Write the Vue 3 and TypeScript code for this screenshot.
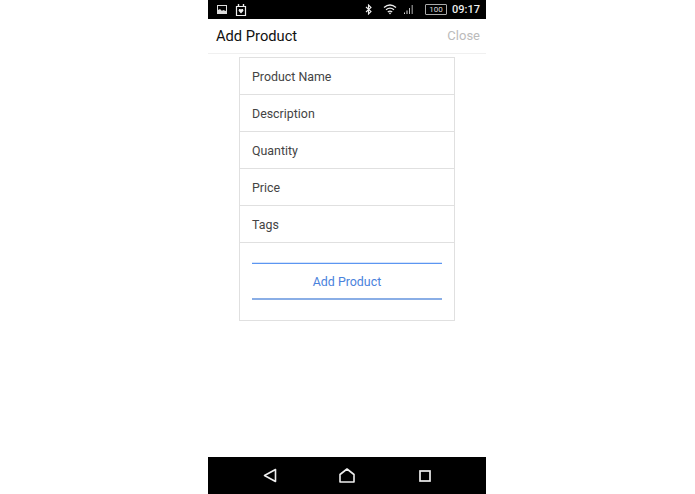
<script setup lang="ts">
const fields: string[] = ['Product Name', 'Description', 'Quantity', 'Price', 'Tags']
</script>

<template>
  <div class="page">
    <div class="phone">
      <div class="status">
        <div class="status-left">
          <svg width="10" height="9" viewBox="0 0 10 9"><rect x="0.5" y="0.5" width="9" height="8" fill="none" stroke="#ddd" /><path d="M1 8V5l2-1 2 2 1-1 3 1v2z" fill="#ddd" /></svg>
          <svg width="12" height="12" viewBox="0 0 11 12"><path d="M1 2.500h9v9H1z" fill="none" stroke="#eee" stroke-width="1.200" /><path d="M3 0v3M8 0v3" stroke="#eee" stroke-width="1.400" /><path d="M5.500 9.500 3 6.800 3.600 5h1.400l.5.800.5-.8h1.400l.6 1.800z" fill="#eee" /></svg>
        </div>
        <div class="status-right">
          <svg class="bt" width="7" height="11" viewBox="0 0 7 11"><path d="M1 3l5 4.500L3.500 10V1L6 3.500 1 8" fill="none" stroke="#eee" stroke-width="1.100" /></svg>
          <svg class="wifi" width="14" height="11" viewBox="0 0 14 11"><path d="M1 3.500Q7-1.500 13 3.500M3 5.800Q7 2.500 11 5.800M4.800 8Q7 6.200 9.200 8" fill="none" stroke="#eee" stroke-width="1.300" /><path d="M5.800 9Q7 8 8.200 9L7 10.500z" fill="#eee" /></svg>
          <svg class="signal" width="11" height="11" viewBox="0 0 11 11"><path d="M1 10h1V8.500H1zM3.500 10h1V6.500h-1z" fill="#ddd" /><path d="M6 10h1V4H6z" fill="#bbb" /><path d="M8.500 10h1.500V1H8.500z" fill="#777" /></svg>
          <div class="battery"><span>100</span></div>
          <span class="time">09:17</span>
        </div>
      </div>

      <header class="header">
        <span class="title">Add Product</span>
        <span class="close">Close</span>
      </header>

      <main class="content">
        <div class="card">
          <div v-for="f in fields" :key="f" class="field">{{ f }}</div>
          <div class="action">
            <div class="btn">Add Product</div>
          </div>
        </div>
      </main>

      <nav class="nav">
        <svg width="14" height="15" viewBox="0 0 14 15"><path d="M12.500 1.500v12L1.500 7.500z" fill="none" stroke="#eee" stroke-width="1.600" stroke-linejoin="round" /></svg>
        <svg class="home" width="16" height="15" viewBox="0 0 16 15"><path d="M1 6.500 8 1l7 5.500V14H1z" fill="none" stroke="#eee" stroke-width="1.600" stroke-linejoin="round" /></svg>
        <svg width="12" height="12" viewBox="0 0 12 12"><rect x="1" y="1" width="10" height="10" fill="none" stroke="#eee" stroke-width="1.700" /></svg>
      </nav>
    </div>
  </div>
</template>

<style>
html, body { margin: 0; background: #fff; }
</style>

<style scoped>
.page { width: 695px; height: 494px; box-sizing: border-box; padding-left: 208px; background: #fff; overflow: hidden; }
.phone { width: 278px; height: 494px; display: flex; flex-direction: column; font-family: Roboto, "Liberation Sans", sans-serif; }
.status { height: 19px; flex: none; background: #000; display: flex; justify-content: space-between; align-items: center; padding: 0 6px 0 9px; color: #eee; }
.status-left { display: flex; align-items: center; gap: 8px; }
.status-right { display: flex; align-items: center; }
.bt { margin-right: 11px; }
.wifi { margin-right: 6px; }
.signal { margin-right: 11px; }
.battery { width: 20px; height: 9px; border: 1px solid #aaa; border-radius: 1px; display: flex; align-items: center; justify-content: center; font-size: 8px; color: #ddd; margin-right: 5px; }
.time { font-size: 11px; font-weight: 500; }
.header { height: 33px; flex: none; display: flex; justify-content: space-between; align-items: center; padding: 0 6px 1px 8px; border-bottom: 1px solid #f0f0f0; }
.title { font-size: 14.7px; color: #111; }
.close { font-size: 13px; color: #bbb; }
.content { flex: 1; padding: 3px 31px 0; }
.card { width: 216px; box-sizing: border-box; border: 1px solid #e0e0e0; }
.field { height: 37px; box-sizing: border-box; border-bottom: 1px solid #e0e0e0; padding: 0 12px; display: flex; align-items: center; font-size: 12.4px; color: #444; }
.action { height: 77px; box-sizing: border-box; padding: 20px 12px 0; }
.btn { height: 37px; box-sizing: border-box; border-top: 1px solid #5b96f2; box-shadow: 0 -1px 0 #d6e4fa; border-bottom: 2px solid #8aaee6; display: flex; align-items: center; justify-content: center; font-size: 12.4px; color: #4a82dc; }
.nav { height: 37px; flex: none; background: #000; display: flex; align-items: center; padding-left: 55px; }
.home { margin: 0 64px 0 62px; }
</style>
